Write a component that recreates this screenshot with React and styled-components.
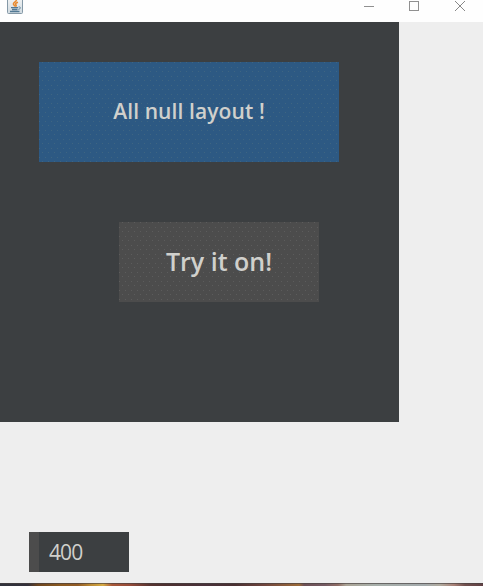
import React from "react";
import styled, { createGlobalStyle } from "styled-components";

const GlobalStyle = createGlobalStyle`
  * { box-sizing: border-box; }
  body { margin: 0; overflow: hidden; background: #eeeeee; }
`;

const Window = styled.main`
  display: flex;
  flex-direction: column;
  width: 483px;
  height: 586px;
  background: #eeeeee;
  font-family: "Open Sans", "Noto Sans", sans-serif;
  color: #d0d0cc;
`;

const TitleBar = styled.header`
  display: flex;
  justify-content: space-between;
  height: 22px;
  flex: none;
  padding-left: 7px;
  background: #fefefe;
`;

const WindowControls = styled.div`
  display: flex;
  width: 137px;
`;

const ControlButton = styled.button`
  display: flex;
  flex: none;
  width: ${({ $width }) => $width}px;
  height: 13px;
  padding: 0;
  border: 0;
  background: none;
  justify-content: center;

  &:last-child { margin-left: 1px; }
`;

const Content = styled.section`
  display: flex;
  flex-direction: column;
  align-items: flex-start;
  flex: 1;
`;

const Panel = styled.div`
  display: flex;
  flex-direction: column;
  gap: 60px;
  width: 399px;
  height: 400px;
  padding: 40px 60px 0 39px;
  background: #3c3f41;
`;

const PanelButton = styled.button`
  display: flex;
  align-items: center;
  justify-content: center;
  align-self: ${({ $align }) => $align};
  width: ${({ $width }) => $width}px;
  height: ${({ $height }) => $height}px;
  margin-right: ${({ $inset }) => $inset}px;
  padding: 0 0 2px;
  border: 0;
  background-color: ${({ $color }) => $color};
  background-image:
    radial-gradient(circle at 1.5px 1.5px, ${({ $grain }) => $grain} 0.6px, transparent 0.7px),
    radial-gradient(circle at 4.5px 6.5px, ${({ $grain }) => $grain} 0.6px, transparent 0.7px);
  background-size: 6px 9px;
  background-position: 2px 8px;
  color: inherit;
  font: 600 ${({ $size }) => $size}px "Open Sans", "Noto Sans", sans-serif;
  letter-spacing: ${({ $spacing }) => $spacing}px;
  white-space: nowrap;
`;

const NumberField = styled.div`
  display: flex;
  align-items: center;
  width: 100px;
  height: 40px;
  margin: 110px 0 0 29px;
  padding: 0 0 0 10px;
  border-left: 10px solid #4c4c4c;
  background: #3c3f41;
  font-size: 21px;
  letter-spacing: -0.9px;
`;

const Wallpaper = styled.footer`
  height: 3px;
  flex: none;
  border-top: 1px solid rgba(70, 65, 65, 0.65);
  background-image: linear-gradient(
    90deg,
    #30323c 0, #33303a 28px, #6c4520 38px, #8a5920 60px, #925b24 78px,
    #b98732 90px, #d6ab43 103px, #a95738 112px, #954a38 130px, #573330 150px,
    #4d3030 165px, #49313a 205px, #4a3032 235px, #70453d 265px, #9b6a38 299px,
    #6d5055 304px, #745a62 325px, #906d65 338px, #aaa395 346px, #a7afaa 375px,
    #a3aaac 425px, #b0aa9e 440px, #a88076 454px, #71504e 465px, #604044 483px
  );
`;

function JavaIcon() {
  return (
    <svg width="16" height="14" viewBox="0 0 16 14" fill="none" aria-hidden="true">
      <defs>
        <linearGradient id="tile" x2="0" y2="1">
          <stop stopColor="#f4f5f5" />
          <stop offset="1" stopColor="#d0dae0" />
        </linearGradient>
      </defs>
      <rect x="0.5" y="-3" width="15" height="16.5" rx="1" fill="url(#tile)" stroke="#8599a7" />
      <path d="M9.5 0C9 2 6 2.5 6.4 4.2C6.6 5.1 8 5.3 7.8 6.6M11 2.2C8.4 3 8.1 4 9 5C9.4 5.6 9 6.2 8.6 6.6" stroke="#e88a30" strokeWidth="1.5" />
      <path d="M4 7.6H11M5 9.5H10.5M3 11.5H12.5" stroke="#527994" strokeWidth="1.3" />
      <path d="M11.5 7C14.2 6.5 14 9 11.3 9.4" stroke="#6689a0" />
    </svg>
  );
}

export default function App() {
  return (
    <>
      <GlobalStyle />
      <Window>
        <TitleBar>
          <JavaIcon />
          <WindowControls>
            <ControlButton $width={46} aria-label="Minimize">
              <svg width="10" height="12"><path d="M0 6.5H10" stroke="#909090" /></svg>
            </ControlButton>
            <ControlButton $width={44} aria-label="Maximize">
              <svg width="10" height="12"><rect x="0.5" y="1.5" width="9" height="9" fill="none" stroke="#909090" /></svg>
            </ControlButton>
            <ControlButton $width={46} aria-label="Close">
              <svg width="10" height="12"><path d="M0 1L10 11M10 1L0 11" stroke="#888888" /></svg>
            </ControlButton>
          </WindowControls>
        </TitleBar>
        <Content>
          <Panel>
            <PanelButton $width={300} $height={100} $align="flex-start" $inset={0} $color="#2d5983" $grain="rgba(105, 130, 130, 0.3)" $size={21} $spacing={0.1}>
              All null layout !
            </PanelButton>
            <PanelButton $width={200} $height={80} $align="flex-end" $inset={20} $color="#4c4c4c" $grain="rgba(125, 125, 125, 0.35)" $size={25} $spacing={0}>
              Try it on!
            </PanelButton>
          </Panel>
          <NumberField>400</NumberField>
        </Content>
        <Wallpaper />
      </Window>
    </>
  );
}
